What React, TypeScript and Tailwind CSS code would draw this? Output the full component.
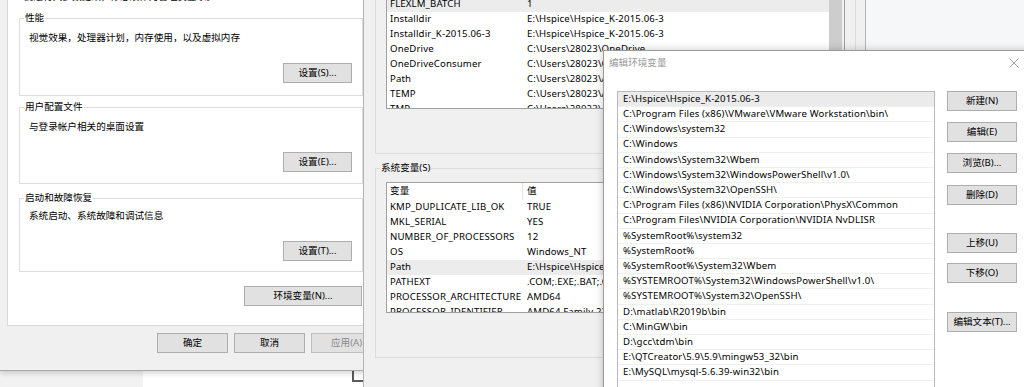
import React from 'react';

const userVars: [string, string][] = [
  ['FLEXLM_BATCH', '1'],
  ['Installdir', 'E:\\Hspice\\Hspice_K-2015.06-3'],
  ['Installdir_K-2015.06-3', 'E:\\Hspice\\Hspice_K-2015.06-3'],
  ['OneDrive', 'C:\\Users\\28023\\OneDrive'],
  ['OneDriveConsumer', 'C:\\Users\\28023\\OneDrive'],
  ['Path', 'C:\\Users\\28023\\AppData\\Local\\Microsoft\\WindowsApps;'],
  ['TEMP', 'C:\\Users\\28023\\AppData\\Local\\Temp'],
  ['TMP', 'C:\\Users\\28023\\AppData\\Local\\Temp'],
];

const sysVars: [string, string][] = [
  ['KMP_DUPLICATE_LIB_OK', 'TRUE'],
  ['MKL_SERIAL', 'YES'],
  ['NUMBER_OF_PROCESSORS', '12'],
  ['OS', 'Windows_NT'],
  ['Path', 'E:\\Hspice\\Hspice_K-2015.06-3;C:\\Program Files (x86)\\VMware'],
  ['PATHEXT', '.COM;.EXE;.BAT;.CMD;.VBS;.VBE;.JS;.JSE;.WSF;.WSH;.MSC'],
  ['PROCESSOR_ARCHITECTURE', 'AMD64'],
  ['PROCESSOR_IDENTIFIER', 'AMD64 Family 23 Model 113 Stepping 0, AuthenticAMD'],
];

const paths = [
  'E:\\Hspice\\Hspice_K-2015.06-3',
  'C:\\Program Files (x86)\\VMware\\VMware Workstation\\bin\\',
  'C:\\Windows\\system32',
  'C:\\Windows',
  'C:\\Windows\\System32\\Wbem',
  'C:\\Windows\\System32\\WindowsPowerShell\\v1.0\\',
  'C:\\Windows\\System32\\OpenSSH\\',
  'C:\\Program Files (x86)\\NVIDIA Corporation\\PhysX\\Common',
  'C:\\Program Files\\NVIDIA Corporation\\NVIDIA NvDLISR',
  '%SystemRoot%\\system32',
  '%SystemRoot%',
  '%SystemRoot%\\System32\\Wbem',
  '%SYSTEMROOT%\\System32\\WindowsPowerShell\\v1.0\\',
  '%SYSTEMROOT%\\System32\\OpenSSH\\',
  'D:\\matlab\\R2019b\\bin',
  'C:\\MinGW\\bin',
  'D:\\gcc\\tdm\\bin',
  'E:\\QTCreator\\5.9\\5.9\\mingw53_32\\bin',
  'E:\\MySQL\\mysql-5.6.39-win32\\bin',
];

function Btn({ children, className = '' }: { children: React.ReactNode; className?: string }) {
  return (
    <div
      className={`h-[20px] flex items-center justify-center border border-[#adadad] bg-[#e1e1e1] leading-none ${className}`}
    >
      {children}
    </div>
  );
}

function Group({
  label,
  text,
  btn,
  mt,
  textMt,
  pb,
}: {
  label: string;
  text: string;
  btn: string;
  mt: string;
  textMt: string;
  pb: string;
}) {
  return (
    <fieldset className={`border border-[#dcdcdc] w-[344px] ${mt} ${pb}`}>
      <legend className="ml-[4px] px-[1px] leading-[12px]">{label}</legend>
      <div className={`pl-[9px] leading-[14px] ${textMt}`}>{text}</div>
      <div className="flex justify-end pr-[10px] mt-[18px]">
        <Btn className="w-[69px]">{btn}</Btn>
      </div>
    </fieldset>
  );
}

export default function App() {
  return (
    <div className="relative w-[1024px] h-[387px] overflow-hidden bg-white text-black text-[9.6px] font-['Noto_Sans','Noto_Sans_CJK_SC',sans-serif]">
      {/* desktop backdrop pieces */}
      <div className="absolute left-0 top-[371px] w-[143px] h-[16px] bg-[#f2f2f2]" />
      <div className="absolute left-[866px] top-0 w-[158px] h-[50px] bg-[#f6f7f9]" />
      <div className="absolute left-[352px] top-[371px] w-[14px] h-[11px] border-l-2 border-b-2 border-[#5a5a5a]" />

      {/* Window 1: System properties */}
      <div className="absolute left-0 top-0 w-[390px] h-[371px] bg-[#f0f0f0] border-b border-[#a9a9a9] shadow-[0_2px_6px_rgba(0,0,0,0.18)]">
        <div className="ml-[7px] w-[370px] h-[336px] bg-white border-x border-b border-[#d9d9d9] pl-[11px]">
          <div className="mt-[-10px] ml-[5px] leading-[14px]">要进行大多数更改，你必须作为管理员登录。</div>
          <Group label="性能" text="视觉效果，处理器计划，内存使用，以及虚拟内存" btn="设置(S)..." mt="mt-[8px]" textMt="mt-[7px]" pb="pb-[12px]" />
          <Group label="用户配置文件" text="与登录帐户相关的桌面设置" btn="设置(E)..." mt="mt-[5px]" textMt="mt-[7px]" pb="pb-[11px]" />
          <Group label="启动和故障恢复" text="系统启动、系统故障和调试信息" btn="设置(T)..." mt="mt-[8px]" textMt="mt-[5px]" pb="pb-[10px]" />
          <div className="w-[344px] flex justify-end mt-[14px] pr-[1px]">
            <Btn className="w-[118px]">环境变量(N)...</Btn>
          </div>
        </div>
        <div className="flex gap-[6px] pl-[157px] mt-[7px]">
          <Btn className="w-[71px]">确定</Btn>
          <Btn className="w-[71px]">取消</Btn>
          <Btn className="w-[71px] bg-[#cccccc] border-[#bfbfbf] text-[#8a8a8a]">应用(A)</Btn>
        </div>
      </div>

      {/* Window 2: Environment variables */}
      <div className="absolute left-[363px] top-0 w-[503px] h-[387px] bg-[#f0f0f0] border-x border-[#b4b4b4]">
        <div className="ml-[11px] mt-[-10px] w-[481px] border-x border-b border-[#dcdcdc] pl-[10px] pb-[44px]">
          <div className="w-[459px] h-[119px] border border-[#a0a0a0] bg-white flex overflow-hidden">
            <div className="flex-1 pt-[6px] tracking-[0.15px]">
              {userVars.map(([k, v], i) => (
                <div key={k} className={`h-[15px] flex items-center whitespace-nowrap ${i === 0 ? 'bg-[#ececec]' : ''}`}>
                  <div className="w-[136px] pl-[3px] shrink-0">{k}</div>
                  <div className="pl-[4px]">{v}</div>
                </div>
              ))}
            </div>
            <div className="w-[15px] bg-[#f0f0f0] shrink-0">
              <div className="w-[13px] h-full bg-[#cdcdcd]" />
            </div>
          </div>
        </div>

        <fieldset className="ml-[11px] mt-[8px] w-[481px] border border-[#dcdcdc] pb-[44px]">
          <legend className="ml-[4px] px-[1px] leading-[12px]">系统变量(S)</legend>
          <div className="ml-[10px] mt-[8px] w-[459px] h-[131px] border border-[#a0a0a0] bg-white overflow-hidden tracking-[0.15px]">
            <div className="h-[17px] flex items-center whitespace-nowrap">
              <div className="w-[136px] pl-[3px] shrink-0 h-full flex items-center border-r border-[#e5e5e5]">变量</div>
              <div className="pl-[4px]">值</div>
            </div>
            {sysVars.map(([k, v], i) => (
              <div key={k} className={`h-[15px] flex items-center whitespace-nowrap ${i === 4 ? 'bg-[#ececec]' : ''}`}>
                <div className="w-[136px] pl-[3px] shrink-0">{k}</div>
                <div className="pl-[4px]">{v}</div>
              </div>
            ))}
          </div>
        </fieldset>
      </div>

      {/* Window 3: Edit environment variable */}
      <div className="absolute left-[603px] top-[50px] w-[430px] h-[345px] bg-white border border-[#9a9a9a] shadow-[0_0_8px_rgba(0,0,0,0.22)]">
        <div className="h-[24px] flex items-center justify-between">
          <div className="pl-[5px] text-[#9a9a9a]">编辑环境变量</div>
          <div className="w-[37px] h-[24px] flex items-center justify-center">
            <svg width="10" height="10" viewBox="0 0 10 10">
              <path d="M0.5 0.5 L9.5 9.5 M9.5 0.5 L0.5 9.5" stroke="#a0a0a0" strokeWidth="1" fill="none" />
            </svg>
          </div>
        </div>
        <div className="flex pl-[13px] mt-[16px]">
          <div className="w-[318px] h-[310px] border border-[#b9b9b9] bg-white overflow-hidden tracking-[0.15px]">
            {paths.map((p, i) => (
              <div
                key={p}
                className={`h-[15.2px] flex items-center pl-[5px] whitespace-nowrap border-b border-[#f0f0f0] ${i === 0 ? 'bg-[#ebebeb]' : ''}`}
              >
                {p}
              </div>
            ))}
          </div>
          <div className="ml-[12px] flex flex-col w-[70px]">
            <Btn>新建(N)</Btn>
            <Btn className="mt-[11px]">编辑(E)</Btn>
            <Btn className="mt-[11px]">浏览(B)...</Btn>
            <Btn className="mt-[12px]">删除(D)</Btn>
            <Btn className="mt-[28px]">上移(U)</Btn>
            <Btn className="mt-[10px]">下移(O)</Btn>
            <Btn className="mt-[29px]">编辑文本(T)...</Btn>
          </div>
        </div>
      </div>
    </div>
  );
}
